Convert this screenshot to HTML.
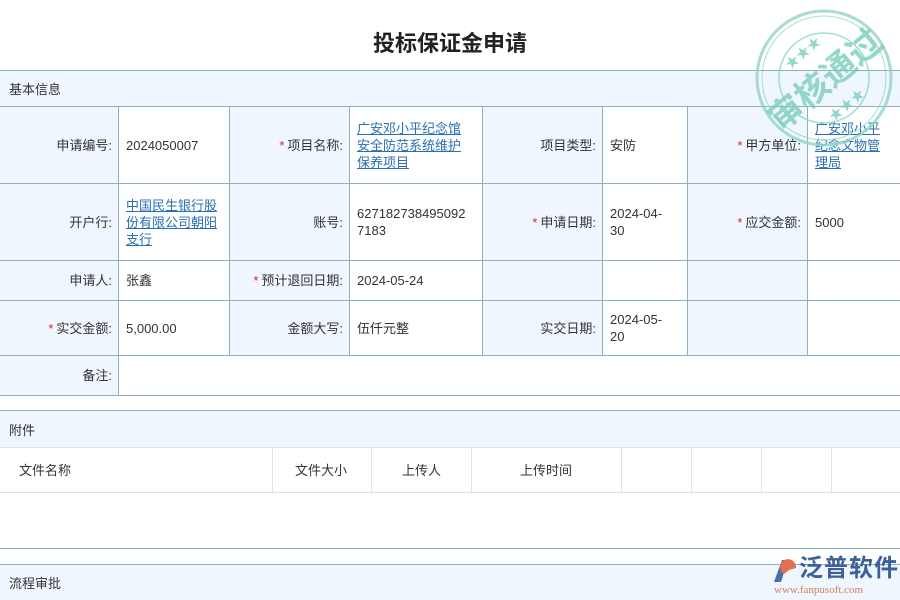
<!DOCTYPE html>
<html><head><meta charset="utf-8"><style>
*{margin:0;padding:0;box-sizing:border-box}
body{width:900px;height:600px;overflow:hidden;background:#fff;font-family:"Liberation Sans","Noto Sans CJK SC",sans-serif;font-size:13px;color:#333;position:relative}
.a{position:absolute}
.c{position:absolute;border-right:1px solid #8fb0c0;border-bottom:1px solid #8fb0c0;display:flex;align-items:center;line-height:17px}
.l{background:#eff6fd;justify-content:flex-end;padding-right:6px;text-align:right}
.v{background:#fff;padding-left:7px;padding-right:18px;word-break:break-all}
.k{color:#2a6fb3;text-decoration:underline}
.s{color:#d9262c;margin-right:3px}
.h{position:absolute;left:0;width:900px;background:#eff6fd;padding-left:9px;display:flex;align-items:center}
</style></head><body>
<div class="a" style="left:0;top:26px;width:900px;text-align:center;font-size:22px;font-weight:bold;color:#222">投标保证金申请</div>
<div class="h" style="top:70px;height:37px;border-top:1px solid #8fb0c0;border-bottom:1px solid #8fb0c0">基本信息</div>

<div class="c l" style="left:0;top:107px;width:119px;height:77px">申请编号:</div>
<div class="c v" style="left:119px;top:107px;width:111px;height:77px">2024050007</div>
<div class="c l" style="left:230px;top:107px;width:120px;height:77px"><span class="s">*</span>项目名称:</div>
<div class="c v" style="left:350px;top:107px;width:133px;height:77px"><span class="k">广安邓小平纪念馆安全防范系统维护保养项目</span></div>
<div class="c l" style="left:483px;top:107px;width:120px;height:77px">项目类型:</div>
<div class="c v" style="left:603px;top:107px;width:85px;height:77px">安防</div>
<div class="c l" style="left:688px;top:107px;width:120px;height:77px"><span class="s">*</span>甲方单位:</div>
<div class="c v" style="left:808px;top:107px;width:92px;height:77px;border-right:0;padding-right:10px"><span class="k">广安邓小平纪念文物管理局</span></div>

<div class="c l" style="left:0;top:184px;width:119px;height:77px">开户行:</div>
<div class="c v" style="left:119px;top:184px;width:111px;height:77px;padding-right:8px"><span class="k">中国民生银行股份有限公司朝阳支行</span></div>
<div class="c l" style="left:230px;top:184px;width:120px;height:77px">账号:</div>
<div class="c v" style="left:350px;top:184px;width:133px;height:77px;padding-right:10px">6271827384950927183</div>
<div class="c l" style="left:483px;top:184px;width:120px;height:77px"><span class="s">*</span>申请日期:</div>
<div class="c v" style="left:603px;top:184px;width:85px;height:77px">2024-04-30</div>
<div class="c l" style="left:688px;top:184px;width:120px;height:77px"><span class="s">*</span>应交金额:</div>
<div class="c v" style="left:808px;top:184px;width:92px;height:77px;border-right:0">5000</div>

<div class="c l" style="left:0;top:261px;width:119px;height:40px">申请人:</div>
<div class="c v" style="left:119px;top:261px;width:111px;height:40px">张鑫</div>
<div class="c l" style="left:230px;top:261px;width:120px;height:40px"><span class="s">*</span>预计退回日期:</div>
<div class="c v" style="left:350px;top:261px;width:133px;height:40px">2024-05-24</div>
<div class="c l" style="left:483px;top:261px;width:120px;height:40px"></div>
<div class="c v" style="left:603px;top:261px;width:85px;height:40px"></div>
<div class="c l" style="left:688px;top:261px;width:120px;height:40px"></div>
<div class="c v" style="left:808px;top:261px;width:92px;height:40px;border-right:0"></div>

<div class="c l" style="left:0;top:301px;width:119px;height:55px"><span class="s">*</span>实交金额:</div>
<div class="c v" style="left:119px;top:301px;width:111px;height:55px">5,000.00</div>
<div class="c l" style="left:230px;top:301px;width:120px;height:55px">金额大写:</div>
<div class="c v" style="left:350px;top:301px;width:133px;height:55px">伍仟元整</div>
<div class="c l" style="left:483px;top:301px;width:120px;height:55px">实交日期:</div>
<div class="c v" style="left:603px;top:301px;width:85px;height:55px">2024-05-20</div>
<div class="c l" style="left:688px;top:301px;width:120px;height:55px"></div>
<div class="c v" style="left:808px;top:301px;width:92px;height:55px;border-right:0"></div>

<div class="c l" style="left:0;top:356px;width:119px;height:40px">备注:</div>
<div class="c v" style="left:119px;top:356px;width:781px;height:40px;border-right:0"></div>

<div class="h" style="top:410px;height:37px;border-top:1px solid #8fb0c0">附件</div>
<div class="a" style="left:0;top:447px;width:900px;height:46px;border-top:1px solid #e2e2e2;border-bottom:1px solid #e2e2e2"></div>
<div class="a" style="left:272px;top:447px;width:1px;height:46px;background:#e2e2e2"></div>
<div class="a" style="left:371px;top:447px;width:1px;height:46px;background:#e2e2e2"></div>
<div class="a" style="left:471px;top:447px;width:1px;height:46px;background:#e2e2e2"></div>
<div class="a" style="left:621px;top:447px;width:1px;height:46px;background:#e2e2e2"></div>
<div class="a" style="left:691px;top:447px;width:1px;height:46px;background:#e2e2e2"></div>
<div class="a" style="left:761px;top:447px;width:1px;height:46px;background:#e2e2e2"></div>
<div class="a" style="left:831px;top:447px;width:1px;height:46px;background:#e2e2e2"></div>
<div class="a" style="left:19px;top:460px">文件名称</div>
<div class="a" style="left:295px;top:460px">文件大小</div>
<div class="a" style="left:402px;top:460px">上传人</div>
<div class="a" style="left:520px;top:460px">上传时间</div>
<div class="a" style="left:0;top:548px;width:900px;height:1px;background:#8fb0c0"></div>
<div class="h" style="top:564px;height:36px;border-top:1px solid #8fb0c0">流程审批</div>

<svg class="a" style="left:750px;top:6px" width="150" height="145" viewBox="0 0 150 145">
<g fill="none" stroke="#8fd6c4" opacity="0.8">
<circle cx="74" cy="72" r="67" stroke-width="3"/>
<circle cx="74" cy="72" r="62" stroke-width="1"/>
<circle cx="74" cy="72" r="45" stroke-width="1.5"/>
</g>
<g transform="rotate(-40 74 72)" fill="#7dcfbb" opacity="0.8">
<text x="74" y="86" text-anchor="middle" font-size="34" font-weight="bold" font-family="Noto Sans CJK SC,sans-serif">审核通过</text>
<text x="74" y="44" text-anchor="middle" font-size="14">★★★</text>
<text x="74" y="112" text-anchor="middle" font-size="14">★★★</text>
</g>
</svg>

<svg class="a" style="left:770px;top:556px" width="30" height="30" viewBox="0 0 30 30">
<path d="M4 26 L12 4 L18 4 L11 26 Z" fill="#4a6fa8"/><path d="M14 18 A8 8 0 1 1 26 12 L19 14 Z" fill="#e07050"/>
</svg>
<div class="a" style="left:799px;top:554px;font-size:24px;color:#3d5f9a;font-weight:bold;letter-spacing:1px;line-height:30px">泛普软件</div>
<div class="a" style="left:774px;top:584px;font-size:11px;color:#d08060;font-family:'Liberation Serif',serif;line-height:13px">www.fanpusoft.com</div>
</body></html>
